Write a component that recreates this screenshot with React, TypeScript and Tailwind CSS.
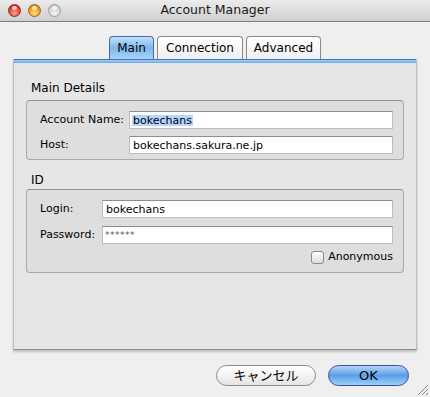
import React from "react";

const font = { fontFamily: '"DejaVu Sans", "Noto Sans CJK JP", sans-serif' };

function Light({ from, to, border }: { from: string; to: string; border: string }) {
  return (
    <div
      className="w-[13px] h-[13px] rounded-full relative"
      style={{ background: `radial-gradient(circle at 50% 75%, ${to} 0%, ${from} 75%)`, border: `1px solid ${border}` }}
    >
      <div className="absolute left-[3px] top-[1px] w-[5px] h-[4px] rounded-full bg-white/70" />
    </div>
  );
}

function Input({ value, selected, stars }: { value: string; selected?: boolean; stars?: boolean }) {
  return (
    <div className="flex-1 h-[18px] bg-white border border-[#bdbdbd] border-t-[#8e8e8e] flex items-center pl-[2px] text-[11px] leading-none">
      {selected ? <span className="bg-[#b4d5fe] px-[1px]">{value}</span> : stars ? <span className="text-[9px] text-[#555] tracking-[0.5px]">{value}</span> : <span className="px-[1px]">{value}</span>}
    </div>
  );
}

export default function App() {
  return (
    <div className="w-[430px] h-[397px] bg-[#efefef] flex flex-col text-black relative overflow-hidden" style={font}>
      {/* title bar */}
      <div className="h-[22px] border-b border-[#7f7f7f] bg-gradient-to-b from-[#ececec] to-[#cfcfcf] grid grid-cols-[1fr_auto_1fr] items-center">
        <div className="flex items-center gap-[7px] pl-[8px]">
          <Light from="#d92b20" to="#ff9c8c" border="#8a2a22" />
          <Light from="#e08a10" to="#ffe070" border="#9a6315" />
          <Light from="#c9c9c9" to="#f4f4f4" border="#9a9a9a" />
        </div>
        <div className="text-[12.5px] text-[#1a1a1a]">Account Manager</div>
        <div />
      </div>

      {/* tabs */}
      <div className="flex justify-center gap-[3px] mt-[14px] h-[23px] relative z-10">
        <div className="w-[45px] rounded-t-[4px] border border-b-0 border-[#3f6fb3] bg-gradient-to-b from-[#c5e0f8] via-[#7db6ec] to-[#a9d3f7] flex items-center justify-center text-[12px]">Main</div>
        <div className="w-[86px] rounded-t-[4px] border border-b-0 border-[#8a8a8a] bg-gradient-to-b from-white to-[#efefef] flex items-center justify-center text-[12px]">Connection</div>
        <div className="w-[75px] rounded-t-[4px] border border-b-0 border-[#8a8a8a] bg-gradient-to-b from-white to-[#efefef] flex items-center justify-center text-[12px]">Advanced</div>
      </div>

      {/* panel */}
      <div className="mx-[13px] h-[291px] bg-[#e6e6e6] border-x border-[#bdbdbd] border-b border-b-[#8e8e8e] shadow-[0_2px_2px_rgba(0,0,0,0.2)] flex flex-col">
        <div className="h-[4px] border-t border-[#3b75c4] bg-gradient-to-b from-[#a6cdf3] to-[#6fa9e6]" />
        <div className="px-[12px] pt-[18px] flex flex-col">
          <div className="text-[12px] pl-[5px] leading-[14px]">Main Details</div>
          <div className="mt-[5px] h-[60px] rounded-[4px] border border-[#a9a9a9] border-t-[#8f8f8f] bg-[#dedede] pl-[13px] pr-[10px] pt-[10px] flex flex-col gap-[7px]">
            <div className="flex items-center">
              <div className="w-[89px] text-[11px]">Account Name:</div>
              <Input value="bokechans" selected />
            </div>
            <div className="flex items-center">
              <div className="w-[89px] text-[11px]">Host:</div>
              <Input value="bokechans.sakura.ne.jp" />
            </div>
          </div>

          <div className="text-[12px] pl-[5px] leading-[14px] mt-[13px]">ID</div>
          <div className="mt-[2px] h-[84px] rounded-[4px] border border-[#a9a9a9] border-t-[#8f8f8f] bg-[#dedede] pl-[13px] pr-[10px] pt-[10px] flex flex-col">
            <div className="flex items-center">
              <div className="w-[62px] text-[11px]">Login:</div>
              <Input value="bokechans" />
            </div>
            <div className="flex items-center mt-[8px]">
              <div className="w-[62px] text-[11px]">Password:</div>
              <Input value="******" stars />
            </div>
            <div className="flex items-center justify-end mt-[5px] gap-[4px]">
              <div className="w-[13px] h-[13px] rounded-[3px] border border-[#8a8a8a] bg-gradient-to-b from-white to-[#dcdcdc]" />
              <div className="text-[11px]">Anonymous</div>
            </div>
          </div>
        </div>
      </div>

      {/* buttons */}
      <div className="flex justify-end gap-[12px] pr-[21px] mt-[15px]">
        <div className="w-[100px] h-[21px] rounded-full border border-[#8c8c8c] bg-gradient-to-b from-white via-[#f3f3f3] to-[#e4e4e4] flex items-center justify-center text-[13px]">キャンセル</div>
        <div className="w-[81px] h-[21px] rounded-full border border-[#33529a] bg-gradient-to-b from-[#b3d5f6] via-[#5a9fe6] to-[#9ed0fb] flex items-center justify-center text-[13px]">OK</div>
      </div>

      {/* resize grip */}
      <svg className="absolute right-[1px] bottom-[1px]" width="13" height="13" viewBox="0 0 13 13">
        <path d="M12 2 L2 12 M12 6 L6 12 M12 10 L10 12" stroke="#8a8a8a" strokeWidth="1" />
      </svg>
    </div>
  );
}
